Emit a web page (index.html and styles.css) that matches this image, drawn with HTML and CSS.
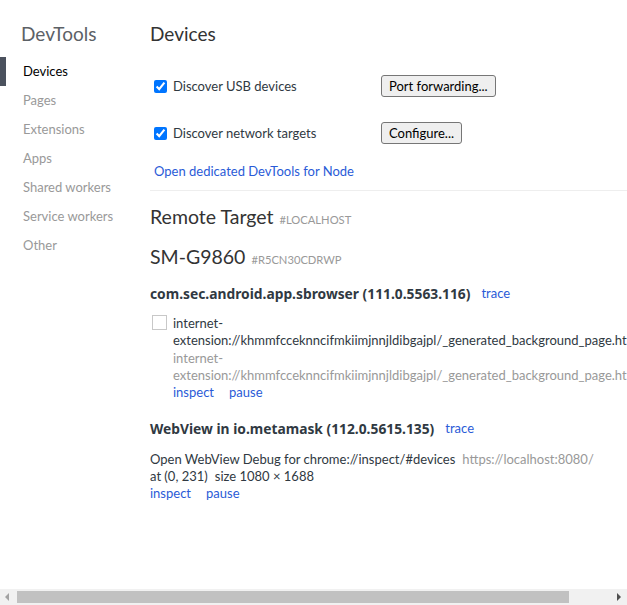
FILE: index.html
```html
<!DOCTYPE html>
<html lang="en">
<head>
<meta charset="utf-8">
<title>Inspect with Chrome Developer Tools</title>
<link rel="stylesheet" href="styles.css">
</head>
<body>
<div class="app">
  <div class="page">
    <nav class="sidebar">
      <div class="brand">DevTools</div>
      <ul class="nav">
        <li class="nav-item active">Devices</li>
        <li class="nav-item">Pages</li>
        <li class="nav-item">Extensions</li>
        <li class="nav-item">Apps</li>
        <li class="nav-item">Shared workers</li>
        <li class="nav-item">Service workers</li>
        <li class="nav-item">Other</li>
      </ul>
    </nav>
    <main class="content">
      <h1 class="page-title">Devices</h1>
      <div class="option-row row-usb">
        <label class="option"><input type="checkbox" class="check" checked>Discover USB devices</label>
        <button class="btn">Port forwarding...</button>
      </div>
      <div class="option-row row-net">
        <label class="option"><input type="checkbox" class="check" checked>Discover network targets</label>
        <button class="btn">Configure...</button>
      </div>
      <div class="node-link"><a class="link">Open dedicated DevTools for Node</a></div>
      <div class="separator"></div>

      <h2 class="target-title">Remote Target <span class="tag">#LOCALHOST</span></h2>
      <h2 class="device-title">SM-G9860 <span class="tag">#R5CN30CDRWP</span></h2>

      <div class="browser-head"><span class="browser-name">com.sec.android.app.sbrowser (111.0.5563.116)</span><a class="link">trace</a></div>
      <div class="target">
        <span class="box"></span>
        <div class="target-body">
          <div class="target-name">internet-extension://khmmfcceknncifmkiimjnnjldibgajpl/_generated_background_page.html</div>
          <div class="target-url">internet-extension://khmmfcceknncifmkiimjnnjldibgajpl/_generated_background_page.html</div>
          <div class="actions"><a class="link">inspect</a><a class="link">pause</a></div>
        </div>
      </div>

      <div class="browser-head second"><span class="browser-name">WebView in io.metamask (112.0.5615.135)</span><a class="link">trace</a></div>
      <div class="webview">
        <div class="line"><span>Open WebView Debug for chrome://inspect/#devices</span><span class="url">https://localhost:8080/</span></div>
        <div class="line"><span>at (0, 231)</span><span class="size">size 1080 × 1688</span></div>
        <div class="actions"><a class="link">inspect</a><a class="link">pause</a></div>
      </div>
    </main>
  </div>
  <div class="hscroll">
    <span class="arrow arrow-left"></span>
    <div class="track"><div class="thumb"></div></div>
    <span class="arrow arrow-right"></span>
  </div>
</div>
</body>
</html>
```
FILE: styles.css
```css
* { box-sizing: border-box; }
html, body { margin: 0; padding: 0; }
body {
  font-family: Lato, "Noto Sans", sans-serif;
  font-size: 13px;
  color: #303942;
  background: #fff;
}
.app {
  height: 605px;
  display: flex;
  flex-direction: column;
  overflow: hidden;
}
.page {
  flex: 1;
  display: flex;
  min-height: 0;
  overflow: hidden;
}
.sidebar {
  width: 150px;
  flex-shrink: 0;
  padding-top: 20px;
}
.brand {
  font-size: 19px;
  line-height: 28px;
  height: 28px;
  padding-left: 21px;
  color: #5c6166;
  margin-bottom: 9px;
}
.nav { list-style: none; margin: 0; padding: 0; }
.nav-item {
  height: 29px;
  line-height: 29px;
  color: #999;
  border-left: 6px solid transparent;
  padding-left: 17px;
}
.nav-item.active {
  color: #000;
  border-left-color: #4b525e;
}
.content {
  flex: 1;
  min-width: 0;
  padding-top: 20px;
}
.page-title {
  margin: 0;
  font-size: 19px;
  line-height: 28px;
  font-weight: normal;
  color: #333;
}
.option-row {
  display: flex;
  align-items: center;
  height: 22px;
}
.row-usb { margin-top: 27px; }
.row-net { margin-top: 25px; }
.option {
  width: 231px;
  display: flex;
  align-items: center;
  color: #303942;
}
.check {
  width: 13px;
  height: 13px;
  margin: 0 6px 0 4px;
  accent-color: #0075ff;
}
.btn {
  font-family: inherit;
  font-size: 13px;
  height: 22px;
  padding: 0 7px;
  background: #efefef;
  border: 1px solid #767676;
  border-radius: 3px;
  color: #000;
}
.node-link {
  margin-top: 19px;
  padding-left: 4px;
  line-height: 17px;
}
.link { color: #2a5bd7; cursor: pointer; }
.separator {
  margin-top: 10px;
  height: 1px;
  background: #eee;
}
.target-title, .device-title {
  margin: 0;
  font-size: 19.5px;
  line-height: 24px;
  font-weight: normal;
  color: #333;
}
.target-title { margin-top: 14px; }
.device-title { margin-top: 13px; }
.tag {
  font-size: 11.2px;
  color: #999;
  margin-left: 1px;
}
.browser-head {
  margin-top: 13px;
  height: 17px;
  line-height: 17px;
  display: flex;
  align-items: center;
  white-space: nowrap;
}
.browser-head.second { margin-top: 19px; }
.browser-name {
  font-family: "Noto Sans", "Open Sans", sans-serif;
  font-size: 13.8px;
  font-weight: bold;
  margin-right: 11px;
}
.target {
  display: flex;
  align-items: flex-start;
  margin-top: 13px;
  padding-left: 2px;
}
.box {
  width: 15px;
  height: 15px;
  border: 1px solid #c8c8c8;
  flex-shrink: 0;
  margin-top: 0;
  margin-right: 6px;
}
.target-body {
  flex: 1;
  min-width: 0;
  line-height: 17.3px;
  padding-top: 0;
}
.target-name { color: #303942; }
.target-url { color: #999; }
.actions { display: flex; gap: 15px; }
.webview {
  margin-top: 14px;
  line-height: 17px;
}
.line { display: flex; white-space: nowrap; }
.url { color: #999; margin-left: 7px; }
.size { margin-left: 7px; }
.hscroll {
  flex-shrink: 0;
  height: 16px;
  background: #f1f1f1;
  display: flex;
  align-items: center;
}
.arrow {
  width: 0;
  height: 0;
  border-top: 4px solid transparent;
  border-bottom: 4px solid transparent;
}
.arrow-left {
  margin-left: 5px;
  border-right: 4px solid #a3a3a3;
}
.arrow-right {
  margin-right: 6px;
  border-left: 4px solid #505050;
}
.track {
  flex: 1;
  height: 100%;
  display: flex;
  align-items: center;
  padding: 0 0 0 8px;
}
.thumb {
  width: 552px;
  height: 12px;
  background: #c1c1c1;
}
```
